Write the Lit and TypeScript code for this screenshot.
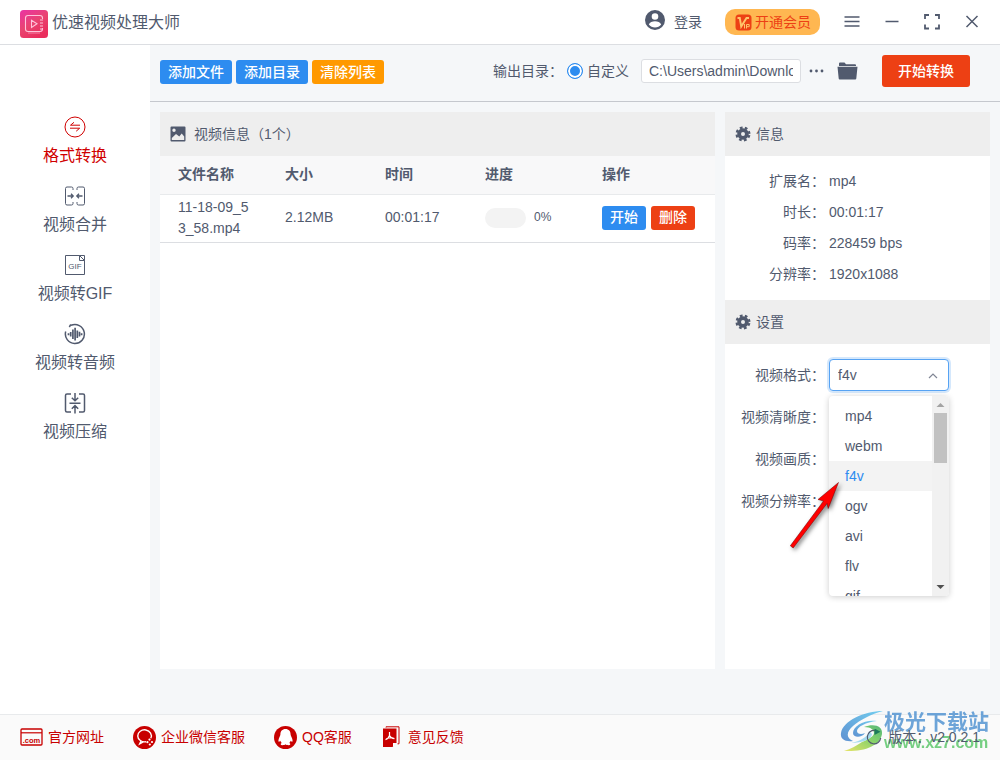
import { LitElement, html, css, svg } from "lit";
import { customElement, state } from "lit/decorators.js";
import { classMap } from "lit/directives/class-map.js";

const navIcons = {
  convert: svg`<circle cx="11" cy="11" r="10"/><path d="M16 9.2H6.5L10 6.3M6 12.2h9.7l-3.5 3"/>`,
  merge: svg`<path d="M9 5V3.500Q9 2 7.500 2H3Q1.500 2 1.500 3.500v15Q1.500 20 3 20h4.500Q9 20 9 18.500V17M13 5V3.500Q13 2 14.500 2H19q1.500 0 1.500 1.500v15q0 1.500-1.500 1.500h-4.500Q13 20 13 18.500V17"/><path stroke-width="1.300" d="M3.500 11H9M7 8.800 9.200 11 7 13.200M18.500 11H13M15 8.800 12.800 11l2.200 2.200"/>`,
  gif: svg`<path d="M1.500 1.500h14l5 5v14h-19zM15.500 1.500v5h5M15.500 1.500h5v5"/><text x="11" y="15" text-anchor="middle" class="glyph">GIF</text>`,
  audio: svg`<path stroke-width="1.500" d="M7 2.300a9.500 9.500 0 1 1-5.300 6.200M6.800 1.500 5.300 4"/><path stroke-width="1.700" d="M4.500 10.200v2M6.700 9v4.400M8.900 6.500v9.500M11.100 4.800v12.700M13.300 7.500v7.500M15.500 8.800v4.700M17.600 10.200v2"/>`,
  compress: svg`<path stroke-width="1.500" d="M7 2H3Q1.500 2 1.500 3.500v15Q1.500 20 3 20h4M15 2h4q1.500 0 1.500 1.500v15q0 1.500-1.500 1.500h-4M5.500 11.200h11M11 1v7.500M7.800 5.700 11 8.800l3.200-3.100M11 21.500V14M7.800 16.700 11 13.600l3.200 3.100"/>`,
};

const gear = svg`<g fill="none" stroke="currentColor"><circle cx="8" cy="8" r="3.900" stroke-width="3.800"/><circle cx="8" cy="8" r="6.400" stroke-width="2.200" stroke-dasharray="2.700 2.326" transform="rotate(10 8 8)"/></g>`;

@customElement("app-root")
export class AppRoot extends LitElement {
  @state() private page = "convert";
  @state() private format = "f4v";

  private nav = [
    { id: "convert", label: "格式转换", icon: navIcons.convert },
    { id: "merge", label: "视频合并", icon: navIcons.merge },
    { id: "gif", label: "视频转GIF", icon: navIcons.gif },
    { id: "audio", label: "视频转音频", icon: navIcons.audio },
    { id: "compress", label: "视频压缩", icon: navIcons.compress },
  ];
  private formats = ["mp4", "webm", "f4v", "ogv", "avi", "flv", "gif"];
  private info = [
    ["扩展名：", "mp4"],
    ["时长：", "00:01:17"],
    ["码率：", "228459 bps"],
    ["分辨率：", "1920x1088"],
  ];

  static styles = css`
    :host {
      display: flex;
      flex-direction: column;
      min-height: 100vh;
      color: #515a6e;
      background: #fff;
      font: 14px/20px "Liberation Sans", "Noto Sans CJK SC", sans-serif;
    }
    *, *::before, *::after { box-sizing: border-box; }
    button, input, select { font: inherit; color: inherit; margin: 0; }
    button { border: 0; background: none; padding: 0; cursor: pointer; }
    a { color: inherit; text-decoration: none; }
    svg { display: block; flex: none; fill: currentColor; }

    .top { display: flex; align-items: center; height: 45px; padding: 0 8px 0 20px; border-bottom: 1px solid #dcdee2; }
    .logo { margin: 4px 4px 0 0; }
    .title { flex: 1; margin: 0; padding-top: 2px; font-size: 16px; font-weight: 400; line-height: 24px; }
    .login { display: flex; align-items: center; gap: 8px; margin-right: 23px; }
    .vip { display: flex; align-items: center; gap: 3px; height: 26px; margin-right: 12px; padding: 0 9px 0 10px; border-radius: 10px; background: #ffb751; color: #ed4014; }
    .win { display: grid; place-items: center; width: 40px; height: 40px; }
    .win svg { fill: none; stroke: currentColor; stroke-width: 1.5; }

    .body { flex: 1; display: flex; }
    .side { flex: none; display: flex; flex-direction: column; align-items: center; gap: 17px; width: 150px; padding-top: 71px; }
    .nav { display: flex; flex-direction: column; align-items: center; gap: 6px; font-size: 16px; line-height: 24px; }
    .nav svg { fill: none; stroke: currentColor; stroke-width: 1; }
    .nav.on { color: #d00000; }
    .glyph { font-size: 8px; fill: currentColor; stroke: none; }

    .main { flex: 1; min-width: 0; display: flex; flex-direction: column; background: #f5f7f9; }
    .bar { display: flex; align-items: center; gap: 4px; height: 57px; padding: 0 30px 4px 10px; border-bottom: 1px solid #c5c8ce; }
    .btn { height: 24px; padding: 0 8px; border-radius: 3px; color: #fff; background: #2d8cf0; font-weight: 500; white-space: nowrap; }
    .warn { background: #ff9900; }
    .err { background: #ed4014; }
    .add { display: flex; gap: 4px; padding-top: 2px; }
    .go { height: 32px; padding: 0 16px; margin-left: 20px; }
    .out { display: flex; align-items: center; margin-left: auto; }
    .radio { display: flex; align-items: center; gap: 4px; margin: 0 12px 0 4px; }
    .radio input { appearance: none; width: 16px; height: 16px; border: 1px solid #2d8cf0; border-radius: 50%; background: #2d8cf0; box-shadow: inset 0 0 0 2px #fff; }
    .path { width: 160px; height: 24px; padding: 0 7px; border: 1px solid #dcdee2; border-radius: 3px; background: #fff; }
    .dots { margin: 0 13px 0 8px; }

    .cols { flex: 1; display: flex; gap: 10px; padding: 10px 10px 45px; }
    .panel { background: #fff; }
    .files { flex: 1; min-width: 0; }
    .props { flex: none; width: 265px; }
    .head { display: flex; align-items: center; gap: 5px; height: 44px; padding: 0 10px; margin: 0; background: #eee; font-size: 14px; font-weight: 400; }
    .wide { gap: 8px; }

    table { width: 100%; border-collapse: collapse; table-layout: fixed; line-height: 21px; }
    th { height: 38px; padding: 0 0 0 18px; text-align: left; background: #f8f8f9; border-bottom: 1px solid #e8eaec; font-weight: 700; }
    td { height: 48px; padding: 2px 12px 3px 18px; word-break: break-all; border-bottom: 1px solid #dcdee2; }
    .c-m { width: 100px; }
    .c-p { width: 117px; }
    .c-a { width: 131px; }
    .prog { display: flex; align-items: center; gap: 8px; font-size: 12px; }
    .track { flex: none; width: 41px; height: 20px; border-radius: 10px; background: #f3f3f3; }
    .ops { display: flex; gap: 5px; }
    td.act { padding-right: 0; }

    .info { display: grid; grid-template-columns: 100px 1fr; gap: 11px 4px; margin: 0; padding: 15px 0 16px; }
    .info dt { text-align: right; }
    .info dd { margin: 0; }
    .form { display: flex; flex-direction: column; gap: 10px; padding-top: 15px; }
    .row { display: grid; grid-template-columns: 100px 120px; gap: 4px; align-items: center; }
    .row > label { text-align: right; white-space: nowrap; }
    .field { position: relative; }
    .sel { display: block; width: 120px; height: 32px; padding: 0 8px; border: 1px solid #dcdee2; border-radius: 4px; background: #fff; appearance: none; }
    .open .sel { border-color: #57a3f3; box-shadow: 0 0 0 2px rgba(45, 140, 240, 0.2); }
    .chev { position: absolute; right: 10px; top: 11px; fill: none; stroke: #808695; stroke-width: 1.2; pointer-events: none; }
    .menu { position: absolute; z-index: 2; left: 0; top: 37px; display: flex; width: 120px; height: 200px; overflow: hidden; border-radius: 4px; background: #fff; box-shadow: 0 1px 6px rgba(0, 0, 0, 0.2); }
    .list { flex: 1; margin: 0; padding: 5px 0; list-style: none; }
    .list li { height: 30px; padding: 0 16px; line-height: 30px; cursor: pointer; }
    .list .on { background: #f3f3f3; color: #2d8cf0; }
    .scroll { display: flex; flex-direction: column; align-items: center; width: 17px; background: #f1f1f1; }
    .thumb { width: 13px; height: 50px; background: #c1c1c1; margin-bottom: auto; }
    .pointer { position: absolute; z-index: 3; left: -43px; top: 117px; pointer-events: none; filter: drop-shadow(2px 2px 2px rgba(0, 0, 0, 0.5)); }

    .foot { position: relative; display: flex; align-items: center; height: 46px; padding: 0 20px 1px; gap: 29px; border-top: 1px solid #e8eaec; background: #fafafa; }
    .link { display: flex; align-items: center; gap: 5px; color: #c80000; white-space: nowrap; }
    .ver { position: relative; z-index: 1; display: flex; align-items: center; gap: 6px; margin-left: auto; white-space: nowrap; }
    .brand { position: absolute; right: 10px; bottom: 8px; display: flex; opacity: 0.8; pointer-events: none; }
    .words { display: flex; flex-direction: column; width: 106px; white-space: nowrap; font-weight: 700; }
    .cn { font-size: 21px; line-height: 24px; color: #4a8fd0; }
    .url { font-size: 16px; line-height: 18px; color: #55c464; }
  `;

  render() {
    return html`
      <header class="top">
        <svg class="logo" width="28" height="28" viewBox="0 0 28 28">
          <defs><linearGradient id="lg" x1="0" y1="0" x2=".6" y2="1"><stop offset="0" stop-color="#ea33a5"/><stop offset=".55" stop-color="#e94470"/><stop offset="1" stop-color="#ea2d5d"/></linearGradient></defs>
          <rect width="28" height="28" rx="3.500" fill="url(#lg)"/>
          <g fill="none" stroke="#ffc4da" stroke-width="1.100"><path d="M22.500 9V8q0-2.500-2.500-2.500H8Q5.500 5.500 5.500 8v11q0 2.500 2.500 2.500h12q2.500 0 2.500-2.500v-1M20 10h3M20 13h3M20 16h3M20 19h3M11.500 10.200v7.300l5.500-3.700z"/><path d="M8 23h12" opacity=".5"/></g>
        </svg>
        <h1 class="title">优速视频处理大师</h1>
        <button class="login">
          <svg width="22" height="24" viewBox="0 0 22 24"><path fill-rule="evenodd" d="M11 0a10 10 0 1 0 0 20 10 10 0 0 0 0-20zm0 3.200a3.300 3.300 0 1 1 0 6.600 3.300 3.300 0 0 1 0-6.600zM4.800 14.500c1-2.200 3.500-3.200 6.200-3.200s5.200 1 6.200 3.200c-1.500 2-3.700 3-6.200 3s-4.700-1-6.200-3z"/></svg>
          登录
        </button>
        <button class="vip">
          <svg width="17" height="17" viewBox="0 0 17 17"><rect x=".5" y=".5" width="16" height="16" rx="3.500"/><g fill="none" stroke="#ffc46b"><path stroke-width="1.900" d="M2.500 4h2.300l1.400 8.500L11.500 4H14"/><path stroke-width="1" d="M9.500 10v4.500M11.500 14.500V10.500h2.700v2.200h-2.700"/></g></svg>
          开通会员
        </button>
        <button class="win" aria-label="菜单"><svg width="16" height="16" viewBox="0 0 16 16"><path d="M.5 3h15M.5 7.500h15M.5 12h15"/></svg></button>
        <button class="win" aria-label="最小化"><svg width="16" height="16" viewBox="0 0 16 16"><path d="M1.500 7.500h13"/></svg></button>
        <button class="win" aria-label="最大化"><svg width="16" height="16" viewBox="0 0 16 16"><path stroke-width="1.800" d="M1 5V1h4M11 1h4v4M15 10.500v4h-4M5 14.500H1v-4"/></svg></button>
        <button class="win" aria-label="关闭"><svg width="16" height="16" viewBox="0 0 16 16"><path d="m2.500 2 11 11m0-11-11 11"/></svg></button>
      </header>

      <div class="body">
        <nav class="side">
          ${this.nav.map(
            (n) => html`<button class=${classMap({ nav: true, on: n.id === this.page })} @click=${() => (this.page = n.id)}>
              <svg width="22" height="22" viewBox="0 0 22 22">${n.icon}</svg>${n.label}
            </button>`
          )}
        </nav>

        <main class="main">
          <div class="bar">
            <div class="add">
              <button class="btn">添加文件</button>
              <button class="btn">添加目录</button>
              <button class="btn warn">清除列表</button>
            </div>
            <div class="out">
              <span>输出目录：</span>
              <label class="radio"><input type="radio" name="dir" checked />自定义</label>
              <input class="path" type="text" aria-label="输出目录" value="C:\\Users\\admin\\Downloads" />
              <button class="dots" aria-label="浏览"><svg width="15" height="4" viewBox="0 0 15 4"><circle cx="2" cy="2" r="1.400"/><circle cx="7.500" cy="2" r="1.400"/><circle cx="13" cy="2" r="1.400"/></svg></button>
              <button aria-label="打开目录"><svg width="21" height="18" viewBox="0 0 21 18"><path d="M2 4V1.500Q2 .5 3 .5h4.500l1.500 1.700h9q1 0 1 1V4z"/><path d="M.5 4.700h20l-1.200 11.800q-.1 1-1 1H2.700q-.9 0-1-1z"/></svg></button>
            </div>
            <button class="btn err go">开始转换</button>
          </div>

          <div class="cols">
            <section class="panel files">
              <h2 class="head wide">
                <svg width="16" height="16" viewBox="0 0 16 16"><path fill-rule="evenodd" d="M1.500.5h13q1 0 1 1v13q0 1-1 1h-13q-1 0-1-1v-13q0-1 1-1zM4 2.500a1.700 1.700 0 1 0 0 3.400 1.700 1.700 0 0 0 0-3.400zM1.800 14h12.400V10.500l-2.500-3-2.400 3L6 8l-4.200 4z"/></svg>
                视频信息（1个）
              </h2>
              <table>
                <colgroup><col /><col class="c-m" /><col class="c-m" /><col class="c-p" /><col class="c-a" /></colgroup>
                <thead><tr><th>文件名称</th><th>大小</th><th>时间</th><th>进度</th><th>操作</th></tr></thead>
                <tbody>
                  <tr>
                    <td>11-18-09_53_58.mp4</td>
                    <td>2.12MB</td>
                    <td>00:01:17</td>
                    <td><div class="prog"><div class="track" role="progressbar" aria-valuenow="0"></div>0%</div></td>
                    <td class="act"><div class="ops"><button class="btn">开始</button><button class="btn err">删除</button></div></td>
                  </tr>
                </tbody>
              </table>
            </section>

            <section class="panel props">
              <h2 class="head"><svg width="16" height="16" viewBox="0 0 16 16">${gear}</svg>信息</h2>
              <dl class="info">${this.info.map(([k, v]) => html`<dt>${k}</dt><dd>${v}</dd>`)}</dl>
              <h2 class="head"><svg width="16" height="16" viewBox="0 0 16 16">${gear}</svg>设置</h2>
              <div class="form">
                <div class="row">
                  <label for="fmt">视频格式：</label>
                  <div class="field open">
                    <select class="sel" id="fmt" .value=${this.format}>
                      ${this.formats.map((f) => html`<option ?selected=${f === this.format}>${f}</option>`)}
                    </select>
                    <svg class="chev" width="12" height="12" viewBox="0 0 12 12"><path d="m2 8 4-4 4 4"/></svg>
                    <div class="menu">
                      <ul class="list" role="listbox">
                        ${this.formats.map(
                          (f) => html`<li role="option" class=${classMap({ on: f === this.format })} @click=${() => (this.format = f)}>${f}</li>`
                        )}
                      </ul>
                      <div class="scroll">
                        <svg width="17" height="17" viewBox="0 0 17 17"><path fill="#a3a3a3" d="m4.500 11 4-4 4 4z"/></svg>
                        <div class="thumb"></div>
                        <svg width="17" height="17" viewBox="0 0 17 17"><path fill="#505050" d="m4.500 6 4 4 4-4z"/></svg>
                      </div>
                    </div>
                    <svg class="pointer" width="60" height="80" viewBox="0 0 60 80"><path d="M52.500 6.500 32 23.500l5.500 1.500L4.300 69.800l2.900 2.200L41 27.500l1.200 5z" fill="#fe0000" stroke="#6a0000" stroke-width=".5" stroke-linejoin="round"/></svg>
                  </div>
                </div>
                ${["视频清晰度：", "视频画质：", "视频分辨率："].map(
                  (t, i) => html`<div class="row"><label for="s${i}">${t}</label><select class="sel" id="s${i}"></select></div>`
                )}
              </div>
            </section>
          </div>
        </main>
      </div>

      <footer class="foot">
        <a class="link" href="#"><svg width="23" height="18" viewBox="0 0 23 18"><rect x="1" y="1" width="21" height="16" rx="1" fill="none" stroke="currentColor" stroke-width="1.300"/><path d="M1 4.200h21v1.200H1z"/><text x="11.500" y="14.500" text-anchor="middle" font-size="7.500" font-weight="700">.com</text></svg>官方网址</a>
        <a class="link" href="#"><svg width="23" height="23" viewBox="0 0 23 23"><circle cx="11.500" cy="11.500" r="11.500"/><g fill="none" stroke="#fff" stroke-width="1.400"><path d="M17.800 12.200A6.800 6 0 1 0 13 15.700M8 15l-1.300 2.800 3.500-1.900"/></g><g fill="#fff"><circle cx="16.500" cy="13.600" r="1.100"/><circle cx="19" cy="16" r="1.100"/><circle cx="14.400" cy="16.200" r="1.100"/><circle cx="16.800" cy="18.500" r="1.100"/></g></svg>企业微信客服</a>
        <a class="link" href="#"><svg width="23" height="23" viewBox="0 0 23 23"><circle cx="11.500" cy="11.500" r="11.500"/><path fill="#fff" d="M11.500 3C8.200 3 6.400 5.300 6.400 8.500c0 1.500-2 3.700-2 6.200 0 1.600.8 1.500 1.900 0 .3 1 .8 1.700 1.500 2.300-1.700.6-1.500 2.200.6 2.200 1.300 0 2.500-.3 3.100-.9.600.6 1.800.9 3.100.9 2.100 0 2.300-1.600.6-2.200.7-.6 1.200-1.300 1.500-2.300 1.100 1.500 1.900 1.600 1.900 0 0-2.500-2-4.700-2-6.200C16.600 5.300 14.800 3 11.500 3z"/></svg>QQ客服</a>
        <a class="link" href="#"><svg width="22" height="22" viewBox="0 0 22 22"><path d="M5 1.500V.8h13v17h-1.500" fill="none" stroke="currentColor"/><path d="M2 2.500h13.500v14L11.500 21H2z"/><path fill="#fff" d="M12 17h3.500l-3.500 4z"/><path d="M8.500 6v3.500M8.500 9.500c-.7 2-2.200 3.700-4 4.200M8.500 9.500c1 2 2.600 3 5 3.200M5.500 12.600c2-.8 4-1 6.300-.8" fill="none" stroke="#fff" stroke-width="1.200"/></svg>意见反馈</a>
        <span class="ver"><svg width="16" height="16" viewBox="0 0 16 16"><path d="M9 1.500A6.700 6.700 0 1 0 14.700 9" fill="none" stroke="currentColor" stroke-width="1.200"/><path fill="#1c7a5a" d="m8.500-.5 6 3.200L8.500 6z"/></svg>版本：v2.0.2.1</span>
        <div class="brand">
          <svg width="44" height="42" viewBox="0 0 44 42">
            <defs><linearGradient id="b" x1="0" y1="1" x2="1" y2="0"><stop offset="0" stop-color="#3878c8"/><stop offset="1" stop-color="#53c5ee"/></linearGradient><linearGradient id="g" x1="0" y1="1" x2="1" y2="0"><stop offset="0" stop-color="#e4df45"/><stop offset=".6" stop-color="#67c847"/><stop offset="1" stop-color="#2aa65a"/></linearGradient></defs>
            <path fill="url(#b)" d="M43 1C24 1 3 11 1 23c-1 6 4 9 12 8-7-3-7-9 0-15C20 10 31 4 43 1z"/>
            <path fill="url(#b)" d="M37 11c-12-2-24 5-24 12 0 5 9 5 12 0-4 2-8 1-8-2 0-4 9-9 20-10z"/>
            <path fill="url(#g)" d="M24 17c10-4 19-1 18 7-2 12-18 18-38 17 7-2 12-5 18-9 7-3 12-6 12-9 0-3-3-6-10-6z"/>
            <path fill="#8fd3ee" d="M29 21c-1 6-9 10-18 12 11 0 21-4 21-9z"/>
          </svg>
          <div class="words"><span class="cn">极光下载站</span><span class="url">www.xz7.com</span></div>
        </div>
      </footer>
    `;
  }
}
